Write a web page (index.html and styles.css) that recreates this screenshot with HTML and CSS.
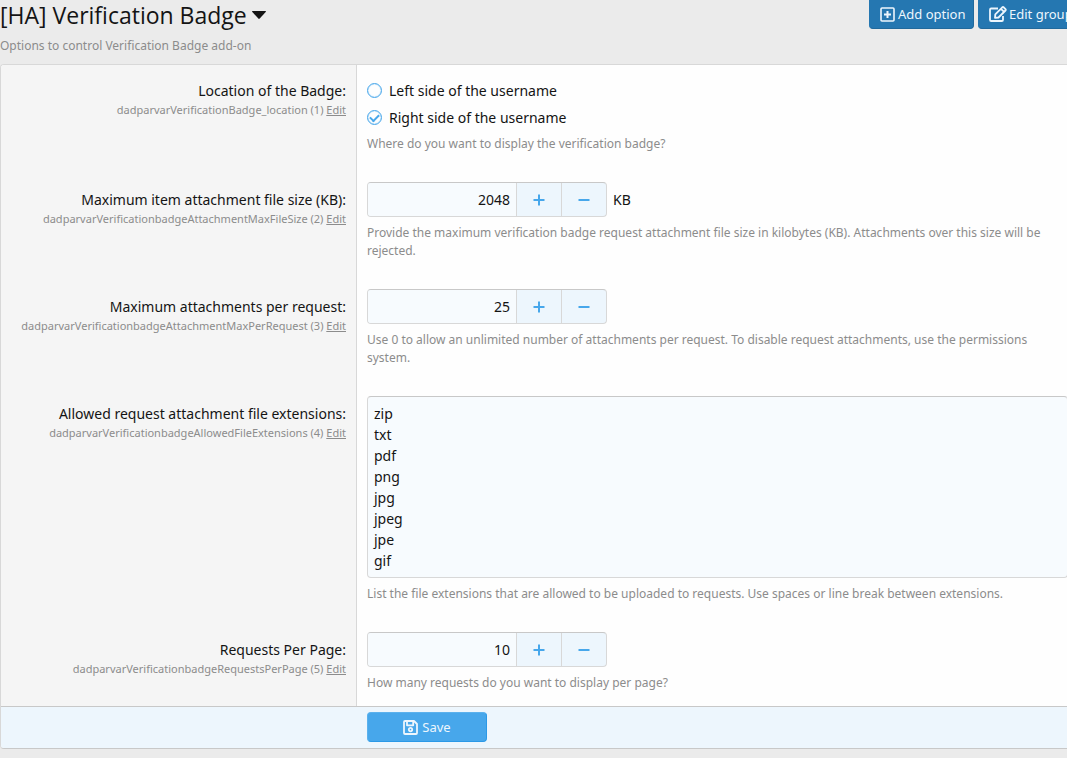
FILE: index.html
```html
<!DOCTYPE html>
<html lang="en">
<head>
  <meta charset="UTF-8" />
  <meta name="viewport" content="width=device-width, initial-scale=1" />
  <title>[HA] Verification Badge</title>
  <link rel="stylesheet" href="styles.css">
</head>
<body>
  <div class="page">
    <header class="page-header">
      <div class="page-heading">
        <h1 class="page-title">
          <button type="button" class="title-menu">[HA] Verification Badge
            <svg class="caret" viewBox="0 0 14 8"><path d="M0.5 0h13q.8.3.2 1L7.7 7.6q-.7.7-1.4 0L.3 1Q-.3.3.5 0z" fill="currentColor"/></svg>
          </button>
        </h1>
        <p class="page-desc">Options to control Verification Badge add-on</p>
      </div>
      <div class="page-actions">
        <a href="#" class="button button-add">
          <svg class="icon" viewBox="0 0 15 15" fill="none" stroke="currentColor" stroke-width="1.6"><rect x="1" y="1" width="13" height="13" rx="1"/><path d="M7.5 4v7M4 7.5h7" stroke-width="2"/></svg>
          <span>Add option</span>
        </a>
        <a href="#" class="button button-edit">
          <svg class="icon icon-edit" viewBox="0 0 18 16" fill="none" stroke="currentColor" stroke-width="1.8" stroke-linejoin="round"><path d="M9 2.5H2.2Q1 2.5 1 3.7v10Q1 15 2.2 15h10.6q1.2 0 1.2-1.3V10"/><path d="M6.3 8.3l7-7q.7-.6 1.4 0l1.8 1.8q.6.7 0 1.4l-7 7-3.5.3zM12 2.8l3 3"/></svg>
          <span>Edit group</span>
        </a>
      </div>
    </header>

    <form class="block">
      <div class="form-row form-row-text">
        <div class="row-label">
          <div class="label-text" id="locationLabel">Location of the Badge:</div>
          <div class="label-hint">dadparvarVerificationBadge_location (1) <a href="#">Edit</a></div>
        </div>
        <div class="row-field">
          <div class="choices" role="radiogroup" aria-labelledby="locationLabel">
            <label class="choice"><input type="radio" name="location" value="left" /> Left side of the username</label>
            <label class="choice"><input type="radio" name="location" value="right" checked /> Right side of the username</label>
          </div>
          <p class="explain">Where do you want to display the verification badge?</p>
        </div>
      </div>

      <div class="form-row">
        <div class="row-label">
          <label class="label-text" for="maxFileSize">Maximum item attachment file size (KB):</label>
          <div class="label-hint">dadparvarVerificationbadgeAttachmentMaxFileSize (2) <a href="#">Edit</a></div>
        </div>
        <div class="row-field">
          <div class="number-line">
            <div class="number-box">
              <input type="number" id="maxFileSize" value="2048" min="0" />
              <button type="button" data-step="1" aria-label="Increase"><svg viewBox="0 0 12 12"><path d="M6 0.5v11M0.5 6h11"/></svg></button>
              <button type="button" data-step="-1" aria-label="Decrease"><svg viewBox="0 0 12 12"><path d="M0.5 6h11"/></svg></button>
            </div>
            <span>KB</span>
          </div>
          <p class="explain">Provide the maximum verification badge request attachment file size in kilobytes (KB). Attachments over this size will be rejected.</p>
        </div>
      </div>

      <div class="form-row">
        <div class="row-label">
          <label class="label-text" for="maxPerRequest">Maximum attachments per request:</label>
          <div class="label-hint">dadparvarVerificationbadgeAttachmentMaxPerRequest (3) <a href="#">Edit</a></div>
        </div>
        <div class="row-field">
          <div class="number-line">
            <div class="number-box">
              <input type="number" id="maxPerRequest" value="25" min="0" />
              <button type="button" data-step="1" aria-label="Increase"><svg viewBox="0 0 12 12"><path d="M6 0.5v11M0.5 6h11"/></svg></button>
              <button type="button" data-step="-1" aria-label="Decrease"><svg viewBox="0 0 12 12"><path d="M0.5 6h11"/></svg></button>
            </div>
          </div>
          <p class="explain">Use 0 to allow an unlimited number of attachments per request. To disable request attachments, use the permissions system.</p>
        </div>
      </div>

      <div class="form-row">
        <div class="row-label">
          <label class="label-text" for="extensions">Allowed request attachment file extensions:</label>
          <div class="label-hint">dadparvarVerificationbadgeAllowedFileExtensions (4) <a href="#">Edit</a></div>
        </div>
        <div class="row-field">
          <textarea id="extensions" rows="8">zip
txt
pdf
png
jpg
jpeg
jpe
gif</textarea>
          <p class="explain">List the file extensions that are allowed to be uploaded to requests. Use spaces or line break between extensions.</p>
        </div>
      </div>

      <div class="form-row">
        <div class="row-label">
          <label class="label-text" for="perPage">Requests Per Page:</label>
          <div class="label-hint">dadparvarVerificationbadgeRequestsPerPage (5) <a href="#">Edit</a></div>
        </div>
        <div class="row-field">
          <div class="number-line">
            <div class="number-box">
              <input type="number" id="perPage" value="10" min="1" />
              <button type="button" data-step="1" aria-label="Increase"><svg viewBox="0 0 12 12"><path d="M6 0.5v11M0.5 6h11"/></svg></button>
              <button type="button" data-step="-1" aria-label="Decrease"><svg viewBox="0 0 12 12"><path d="M0.5 6h11"/></svg></button>
            </div>
          </div>
          <p class="explain">How many requests do you want to display per page?</p>
        </div>
      </div>

      <div class="submit-row">
        <button type="submit" class="button button-save">
          <svg class="icon" viewBox="0 0 15 15" fill="none" stroke="currentColor" stroke-width="1.8" stroke-linejoin="round"><path d="M2 1h9l3 3v9q0 1-1 1H2q-1 0-1-1V2q0-1 1-1z"/><path d="M4 1.5v3.8h6.2V1.5"/><circle cx="7.5" cy="9.6" r="1.7"/></svg>
          <span>Save</span>
        </button>
      </div>
    </form>
  </div>

  <script>
    document.querySelectorAll(".number-box button").forEach(button => {
      button.addEventListener("click", function () {
        const input = button.parentElement.querySelector("input");
        if (button.dataset.step === "1") {
          input.stepUp();
        } else {
          input.stepDown();
        }
      });
    });

    document.querySelector(".block").addEventListener("submit", function (event) {
      event.preventDefault();
    });
  </script>
</body>
</html>
```
FILE: styles.css
```css
* {
  box-sizing: border-box;
}
body {
  margin: 0;
  background: #ebebeb;
  color: #141414;
  font-family: "Segoe UI", "Noto Sans", sans-serif;
  font-size: 14px;
  line-height: 21px;
  overflow-x: hidden;
}
h1, p {
  margin: 0;
}
button, input, textarea {
  font: inherit;
  color: inherit;
}
/* the panel runs past the right edge of the window */
.page {
  margin-right: -12px;
}
.page-header {
  display: flex;
  justify-content: space-between;
  align-items: flex-start;
  height: 64px;
}
.page-title {
  font-family: "Segoe UI", "Open Sans", sans-serif;
  font-size: 23px;
  font-weight: normal;
  line-height: 30px;
}
.title-menu {
  display: flex;
  align-items: center;
  gap: 5px;
  padding: 0;
  border: none;
  background: none;
  cursor: pointer;
}
.caret {
  width: 14px;
  height: 8px;
}
.page-desc {
  margin-top: 7px;
  font-size: 12px;
  line-height: 18px;
  color: #8c8c8c;
}
.page-actions {
  display: flex;
  gap: 4px;
}
.button {
  display: flex;
  align-items: center;
  justify-content: center;
  gap: 4px;
  height: 30px;
  border: 1px solid;
  border-radius: 4px;
  font-size: 13px;
  color: #edf6fd;
  text-decoration: none;
  white-space: nowrap;
  cursor: pointer;
}
.page-actions .button {
  justify-content: flex-start;
  gap: 3px;
  height: 29px;
  padding: 0 10px;
  background: #2577b1;
  border-color: #2577b1 #21699c #21699c #2577b1;
  border-top: none;
  border-radius: 0 0 4px 4px;
}
.button-add {
  width: 105px;
}
.button-edit {
  width: 101px;
}
.page-actions .button-edit {
  gap: 2px;
}
.icon {
  flex: none;
  width: 15px;
  height: 15px;
}
.icon-edit {
  width: 18px;
  height: 16px;
}
.block {
  border: 1px solid #d8d8d8;
  border-bottom-color: #c8c8c8;
  border-radius: 4px;
  background: #fefefe;
  overflow: hidden;
}
.form-row {
  display: grid;
  grid-template-columns: 356px 1fr;
}
.row-label {
  padding: 22px 10px 15px;
  background: #f5f5f5;
  border-right: 1px solid #d8d8d8;
  text-align: right;
}
.form-row-text .row-label {
  padding-top: 15px;
}
.label-text {
  display: block;
}
.label-hint {
  font-size: 11px;
  line-height: 18px;
  color: #8c8c8c;
}
.label-hint a {
  color: inherit;
}
.row-field {
  padding: 15px 10px 14px;
}
.explain {
  margin-top: 7px;
  font-size: 12px;
  line-height: 18px;
  color: #8c8c8c;
}
.choices {
  display: flex;
  flex-direction: column;
  align-items: flex-start;
  gap: 6px;
}
.choice {
  display: flex;
  align-items: center;
  gap: 7px;
  cursor: pointer;
}
.choice input {
  appearance: none;
  width: 15px;
  height: 15px;
  margin: 0;
  border: 1px solid #47a7eb;
  border-radius: 50%;
  box-shadow: inset 0 0 1px #47a7eb;
  display: grid;
  place-items: center;
}
.choice input:checked::before {
  content: "";
  width: 7px;
  height: 4px;
  border-left: 2px solid #47a7eb;
  border-bottom: 2px solid #47a7eb;
  transform: translateY(-1px) rotate(-45deg);
}
.number-line {
  display: flex;
  align-items: center;
  gap: 6px;
}
.number-box {
  display: flex;
  width: 240px;
  height: 35px;
  border: 1px solid #d8d8d8;
  border-top-color: #c8c8c8;
  border-radius: 4px;
  background: #edf6fd;
  overflow: hidden;
}
.number-box input {
  flex: 1;
  min-width: 0;
  padding: 0 6px;
  border: none;
  background: #f7fbfe;
  text-align: right;
  appearance: textfield;
}
.number-box input::-webkit-inner-spin-button {
  appearance: none;
  margin: 0;
}
.number-box button {
  display: flex;
  align-items: center;
  justify-content: center;
  width: 45px;
  padding: 0;
  border: none;
  border-left: 1px solid #d8d8d8;
  background: none;
  cursor: pointer;
}
.number-box svg {
  width: 12px;
  height: 12px;
  stroke: #47a7eb;
  stroke-width: 2;
}
textarea {
  display: block;
  width: 100%;
  padding: 6px;
  border: 1px solid #d8d8d8;
  border-top-color: #c8c8c8;
  border-radius: 4px;
  background: #f7fbfe;
  resize: none;
}
.submit-row {
  padding: 5px 10px 6px 366px;
  border-top: 1px solid #c8c8c8;
  background: #edf6fd;
}
.button-save {
  width: 120px;
  background: #47a7eb;
  border-color: #5bb1ed #2b99e7 #2b99e7 #5bb1ed;
}
```
